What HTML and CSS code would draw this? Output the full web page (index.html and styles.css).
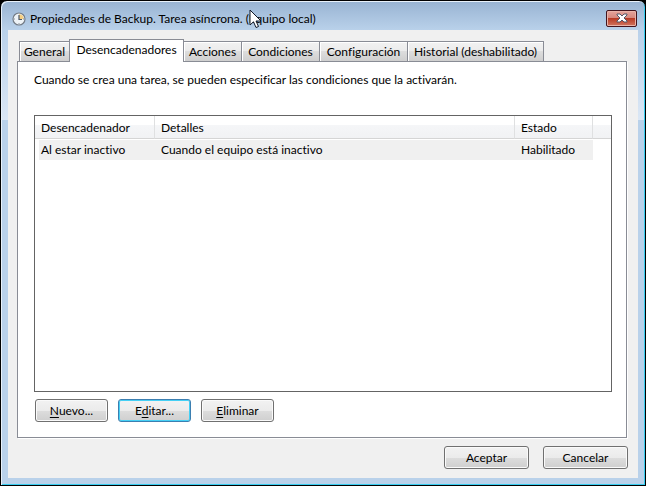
FILE: index.html
```html
<!DOCTYPE html>
<html lang="es">
<head>
<meta charset="utf-8">
<title>Propiedades de Backup. Tarea asíncrona. (Equipo local)</title>
<link rel="stylesheet" href="styles.css">
</head>
<body>
<main class="window">
  <header class="titlebar">
    <svg class="app-icon" viewBox="0 0 14 14" aria-hidden="true">
      <circle cx="7" cy="7" r="6" fill="#eef3f7" stroke="#747c86" stroke-width="1.2"/>
      <path d="M7 7V2.200A4.800 4.800 0 0 1 11.800 7Z" fill="#f5cf83"/>
      <path d="M7 3V7.500H10" fill="none" stroke="#4c5968" stroke-width="1.200"/>
      <path d="M2 7h1M7 11v1M11 7h1" stroke="#8b949e"/>
    </svg>
    <h1 class="title">Propiedades de Backup. Tarea asíncrona. (Equipo local)</h1>
    <button class="close" type="button" aria-label="Cerrar">
      <svg viewBox="0 0 12 10" aria-hidden="true">
        <path d="M1 1H4L6 3L8 1H11V2L8 5L11 8V9H8L6 7L4 9H1V8L4 5L1 2Z" fill="#fff" stroke="#535666" stroke-width="1"/>
      </svg>
    </button>
    <svg class="pointer" viewBox="0 0 13 20" aria-hidden="true">
      <path d="M1 1V16L4.500 12.800L7 18.500L9.500 17.500L7 12H12Z" fill="#fff" stroke="#111827"/>
    </svg>
  </header>
  <section class="client">
    <div class="tabs" role="tablist">
      <button class="tab" type="button" role="tab">General</button>
      <button class="tab active" type="button" role="tab" aria-selected="true">Desencadenadores</button>
      <button class="tab" type="button" role="tab">Acciones</button>
      <button class="tab" type="button" role="tab">Condiciones</button>
      <button class="tab" type="button" role="tab">Configuración</button>
      <button class="tab" type="button" role="tab">Historial (deshabilitado)</button>
    </div>
    <div class="panel" role="tabpanel">
      <p class="intro">Cuando se crea una tarea, se pueden especificar las condiciones que la activarán.</p>
      <div class="list">
        <table class="triggers">
          <colgroup><col class="c-name"><col class="c-detail"><col class="c-state"><col></colgroup>
          <thead><tr><th>Desencadenador</th><th>Detalles</th><th>Estado</th><td></td></tr></thead>
          <tbody><tr><td>Al estar inactivo</td><td>Cuando el equipo está inactivo</td><td>Habilitado</td><td></td></tr></tbody>
        </table>
      </div>
      <div class="actions">
        <button class="btn" type="button"><u>N</u>uevo...</button>
        <button class="btn focused" type="button">E<u>d</u>itar...</button>
        <button class="btn" type="button"><u>E</u>liminar</button>
      </div>
    </div>
    <footer class="footer">
      <button class="btn wide" type="button">Aceptar</button>
      <button class="btn wide" type="button">Cancelar</button>
    </footer>
  </section>
</main>
</body>
</html>
```
FILE: styles.css
```css
* { box-sizing: border-box; }
body {
  margin: 0;
  background: #000;
  color: #000;
  font: 12px/16px Lato, "Open Sans", sans-serif;
  font-variant-ligatures: none;
}
button { font: inherit; font-variant-ligatures: none; color: inherit; margin: 0; padding: 0; }
.window {
  display: flex;
  flex-direction: column;
  height: 100vh;
  padding: 0 6px 6px;
  border: 1px solid #000;
  border-radius: 7px 7px 0 0;
  background: linear-gradient(#98b3d2, #b9d1ea 29px, #dbe7f5 119px, #b9d1ea 119px);
  box-shadow: inset 1px 1px #e8f1fa, inset -1px -1px #37cdf0;
}
.titlebar {
  position: relative;
  display: flex;
  align-items: center;
  height: 29px;
  flex: none;
  padding: 7px 2px 0 5px;
}
.app-icon { width: 14px; height: 14px; }
.title { margin: 0 0 0 4px; font-size: 12px; font-weight: normal; flex: 1; white-space: nowrap; }
.close {
  display: flex;
  align-items: center;
  justify-content: center;
  width: 31px;
  height: 17px;
  margin-bottom: 2px;
  border: 1px solid #43141d;
  border-radius: 2px;
  background: linear-gradient(#e5a49c, #d5857a 50%, #b83b25 50%, #d1755f);
  box-shadow: inset 0 0 0 1px #e9b3a8;
}
.close svg { width: 12px; height: 10px; }
.pointer { position: absolute; left: 242px; top: 8px; width: 13px; height: 20px; }
.client {
  display: flex;
  flex-direction: column;
  flex: 1;
  min-height: 0;
  margin: 0 1px 1px;
  padding: 9px 9px;
  background: #f0f0f0;
}
.tabs {
  display: grid;
  grid-template-columns: 51px 114px 58px 78px 88px 136px;
  align-items: end;
  height: 22px;
  padding-left: 2px;
}
.tab {
  height: 20px;
  border: 1px solid #898c95;
  border-width: 1px 1px 0 0;
  background: linear-gradient(#f2f2f2, #ebebeb 50%, #dddddd 50%, #cfcfcf);
  box-shadow: inset 1px 1px #fff;
  white-space: nowrap;
}
.tab:first-child { border-left-width: 1px; }
.tab.active {
  position: relative;
  height: 23px;
  margin: 0 0 -1px -1px;
  padding-bottom: 2px;
  border-left-width: 1px;
  background: #fff;
}
.panel {
  display: flex;
  flex-direction: column;
  flex: 1;
  min-height: 0;
  margin-right: 2px;
  padding: 10px 14px 15px 16px;
  border: 1px solid #898c95;
  background: #fff;
  box-shadow: 1px 1px #fff;
}
.intro { margin: 0 0 27px; }
.list { flex: 1; border: 1px solid #646464; }
.triggers { width: 100%; table-layout: fixed; border-collapse: separate; border-spacing: 0; }
.c-name { width: 120px; }
.c-detail { width: 360px; }
.c-state { width: 78px; }
.triggers th, .triggers td { padding: 0 6px; text-align: left; font-weight: normal; white-space: nowrap; }
.triggers thead tr { height: 23px; }
.triggers thead th, .triggers thead td {
  border-bottom: 1px solid #d5d5d5;
  padding-top: 2px;
  background: linear-gradient(#fff 40%, #f5f6f8 40%, #f1f2f4);
}
.triggers thead th { border-right: 1px solid #dfe0e1; }
.triggers tbody td { height: 21px; border-top: 1px solid #fff; background: #f0f0f0; }
.triggers tbody td:first-child { background: linear-gradient(90deg, #fff 4px, #f0f0f0 4px); }
.triggers tbody td:last-child { background: #fff; }
.actions { display: flex; gap: 10px; margin: 7px 0 0 1px; }
.btn {
  width: 73px;
  height: 23px;
  border: 1px solid #707070;
  border-radius: 3px;
  background: linear-gradient(#f2f2f2, #ebebeb 50%, #dddddd 50%, #cfcfcf);
  box-shadow: inset 0 0 0 1px #fafafa;
}
.btn.focused { border-color: #3c7fb1; box-shadow: inset 0 0 0 1px #45d0f5; }
.btn.wide { width: 85px; }
.footer { display: flex; justify-content: flex-end; gap: 14px; padding: 8px 1px 0 0; }
u { text-underline-offset: 2px; text-decoration-thickness: 1px; }
```
